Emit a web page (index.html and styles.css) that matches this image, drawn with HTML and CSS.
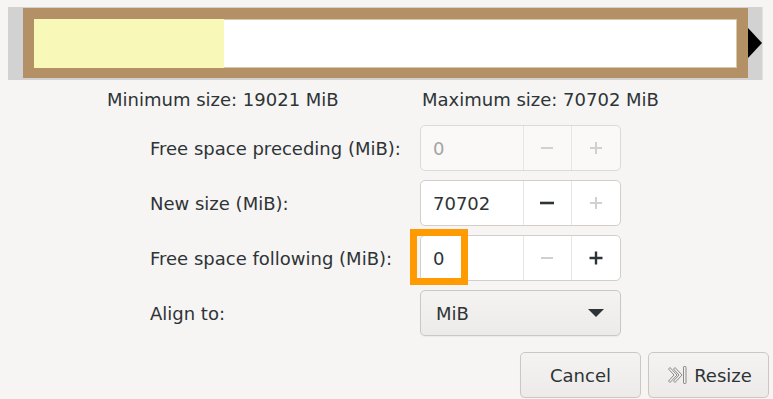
FILE: index.html
```html
<!DOCTYPE html>
<html lang="en">
<head>
    <meta charset="UTF-8">
    <title>Resize/Move</title>
    <link rel="stylesheet" href="styles.css">
</head>
<body>
    <div class="bar">
        <div class="partition">
            <div class="used"></div>
        </div>
        <div class="grip"><span class="arrow"></span></div>
    </div>

    <div class="sizes">
        <span class="size-min">Minimum size: 19021 MiB</span>
        <span>Maximum size: 70702 MiB</span>
    </div>

    <div class="form">
        <label>Free space preceding (MiB):</label>
        <div class="spin disabled">
            <div class="entry">0</div>
            <div class="step dim">
                <svg width="16" height="16" viewBox="0 0 16 16"><path d="M2 8h12" stroke="currentColor" stroke-width="2"/></svg>
            </div>
            <div class="step dim">
                <svg width="16" height="16" viewBox="0 0 16 16"><path d="M2 8h12M8 2v12" stroke="currentColor" stroke-width="2"/></svg>
            </div>
        </div>

        <label>New size (MiB):</label>
        <div class="spin">
            <div class="entry">70702</div>
            <div class="step">
                <svg width="16" height="16" viewBox="0 0 16 16"><path d="M1 8h14" stroke="currentColor" stroke-width="2.6"/></svg>
            </div>
            <div class="step dim">
                <svg width="16" height="16" viewBox="0 0 16 16"><path d="M2 8h12M8 2v12" stroke="currentColor" stroke-width="2"/></svg>
            </div>
        </div>

        <label>Free space following (MiB):</label>
        <div class="spin focused">
            <div class="entry">0</div>
            <div class="step dim">
                <svg width="16" height="16" viewBox="0 0 16 16"><path d="M2 8h12" stroke="currentColor" stroke-width="2"/></svg>
            </div>
            <div class="step">
                <svg width="16" height="16" viewBox="0 0 16 16"><path d="M1.5 8h13M8 1.5v13" stroke="currentColor" stroke-width="2.4"/></svg>
            </div>
            <div class="highlight"></div>
        </div>

        <label>Align to:</label>
        <div class="combo">
            <span>MiB</span>
            <span class="caret"></span>
        </div>
    </div>

    <div class="actions">
        <button type="button">Cancel</button>
        <button type="button">
            <svg width="24" height="24" viewBox="0 0 24 24" fill="none" stroke="#8a8c88" stroke-width="1" stroke-linejoin="round">
                <path d="M3.5 6l5.5 6-5.5 6 1.5 1.5 7-7.5-7-7.5z"/>
                <path d="M8.5 6l5.5 6-5.5 6 1.5 1.5 7-7.5-7-7.5z"/>
                <rect x="18.5" y="3.5" width="2.5" height="17" rx="0.6"/>
            </svg>
            Resize
        </button>
    </div>
</body>
</html>
```

FILE: styles.css
```css
body {
    margin: 0;
    background-color: #f6f5f4;
    font-family: "DejaVu Sans", sans-serif;
    font-size: 18px;
    color: #2e3436;
}

/* partition graphic */
.bar {
    display: flex;
    box-sizing: border-box;
    width: 755px;
    height: 73px;
    margin: 7px 0 0 8px;
    padding: 1px 0 2px 15px;
    background-color: #d2d2d2;
    border-right: 1px solid #e4e2df;
}

.partition {
    flex: 1;
    display: flex;
    border: 11px solid #b39066;
    border-bottom-width: 10px;
    background-color: #fff;
    box-shadow: inset 0 0 0 1px #d8c7a8;
}

.used {
    width: 190px;
    background-color: #f8f8b9;
}

.grip {
    width: 14px;
    display: flex;
    align-items: center;
}

.arrow {
    width: 0;
    height: 0;
    border-left: 14px solid #000;
    border-top: 15px solid transparent;
    border-bottom: 15px solid transparent;
}

.sizes {
    display: flex;
    height: 22px;
    line-height: 22px;
    margin-top: 9px;
    padding-left: 107px;
}

.size-min {
    width: 315px;
}

/* fields */
.form {
    display: grid;
    grid-template-columns: 270px 201px;
    grid-auto-rows: 46px;
    row-gap: 9px;
    margin: 14px 0 0 150px;
}

.form label {
    display: flex;
    align-items: center;
}

.spin {
    position: relative;
    display: flex;
    box-sizing: border-box;
    border: 1px solid #d3cec9;
    border-radius: 5px;
    background-color: #fff;
}

.spin.disabled {
    background-color: #faf9f8;
    border-color: #ddd9d5;
    color: #a3a5a3;
}

.entry {
    width: 90px;
    padding-left: 12px;
    display: flex;
    align-items: center;
}

.step {
    width: 48px;
    display: flex;
    align-items: center;
    justify-content: center;
    border-left: 1px solid #e8e5e2;
    color: #2e3436;
}

.step.dim {
    color: #d0d0ce;
}

.highlight {
    position: absolute;
    left: -11px;
    top: -7px;
    width: 58px;
    height: 56px;
    box-sizing: border-box;
    border: 7px solid #ff9a00;
}

.combo {
    display: flex;
    align-items: center;
    justify-content: space-between;
    padding: 0 16px 0 15px;
    border: 1px solid #cdc7c2;
    border-radius: 5px;
    background: linear-gradient(#f4f3f2, #edebe9);
    box-shadow: 0 1px 1px rgba(0, 0, 0, 0.05);
}

.caret {
    width: 0;
    height: 0;
    border-top: 8px solid #2e3436;
    border-left: 8px solid transparent;
    border-right: 8px solid transparent;
}

/* dialog buttons */
.actions {
    display: flex;
    justify-content: flex-end;
    gap: 7px;
    margin: 16px 4px 0 0;
}

button {
    display: flex;
    align-items: center;
    justify-content: center;
    gap: 5px;
    width: 121px;
    height: 46px;
    padding: 0;
    font-family: inherit;
    font-size: 18px;
    color: #2e3436;
    border: 1px solid #cdc7c2;
    border-radius: 5px;
    background: linear-gradient(#f4f3f2, #edebe9);
    box-shadow: 0 1px 1px rgba(0, 0, 0, 0.05);
}
```
